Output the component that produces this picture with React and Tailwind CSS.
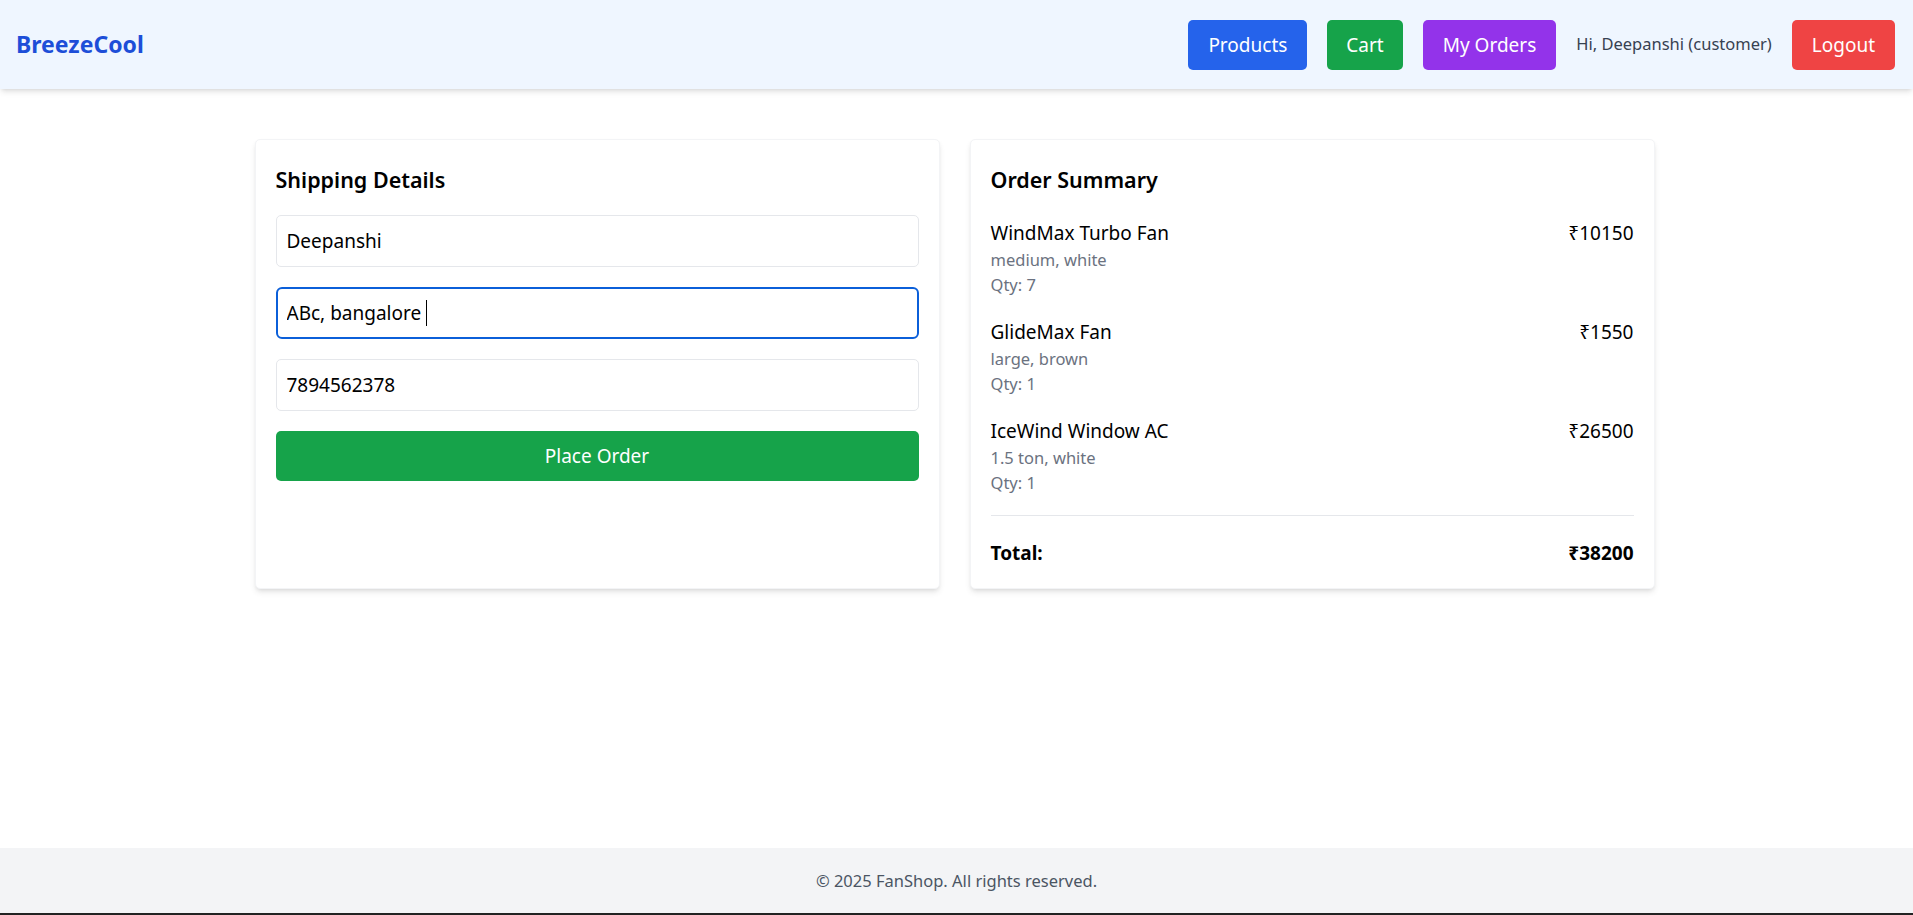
import { useState } from "react";

const items = [
  { name: "WindMax Turbo Fan", variant: "medium, white", qty: 7, price: 10150 },
  { name: "GlideMax Fan", variant: "large, brown", qty: 1, price: 1550 },
  { name: "IceWind Window AC", variant: "1.5 ton, white", qty: 1, price: 26500 },
];

const Header = () => (
  <header className="bg-[#eff6ff] shadow-md pl-4 pr-[18px] h-[89px] flex items-center justify-between">
    <h1 className="text-[23px] font-bold text-[#1d4ed8]">BreezeCool</h1>
    <nav className="flex items-center gap-5">
      <button className="bg-[#2563eb] text-white px-5 py-2.5 rounded-[5px] text-[19px] leading-[30px]">
        Products
      </button>
      <button className="bg-[#16a34a] text-white px-[19px] py-2.5 rounded-[5px] text-[19px] leading-[30px]">
        Cart
      </button>
      <button className="bg-[#9333ea] text-white px-5 py-2.5 rounded-[5px] text-[19px] leading-[30px]">
        My Orders
      </button>
      <span className="text-[#374151] text-[16.5px]">Hi, Deepanshi (customer)</span>
      <button className="bg-[#ef4444] text-white px-5 py-2.5 rounded-[5px] text-[19px] leading-[30px]">
        Logout
      </button>
    </nav>
  </header>
);

export default function App() {
  const [form, setForm] = useState({
    name: "Deepanshi",
    address: "ABc, bangalore ",
    phone: "7894562378",
  });

  const total = items.reduce((sum, i) => sum + i.price, 0);

  const handleChange = (e) => {
    setForm((prev) => ({ ...prev, [e.target.name]: e.target.value }));
  };

  return (
    <div className="min-h-screen flex flex-col bg-white text-black font-['Noto_Sans',sans-serif]">
      <Header />

      <main className="flex-1 w-full max-w-[1440px] mx-auto pl-[18px] pr-[22px] pt-[50px]">
        <div className="grid grid-cols-2 gap-[30px]">
          {/* Shipping form */}
          <div className="bg-white rounded-[5px] border border-gray-100 shadow-md p-5">
            <h2 className="text-[21.5px] leading-[35px] font-semibold mt-[2px] mb-[18px]">Shipping Details</h2>
            <div className="space-y-5">
              <input
                name="name"
                value={form.name}
                onChange={handleChange}
                className="w-full border border-[#e5e7eb] rounded-[5px] px-2.5 py-2.5 text-[19px] leading-[30px] outline-none"
              />
              <div className="relative">
                <input
                  name="address"
                  value={form.address}
                  onChange={handleChange}
                  className="w-full border-2 border-[#0b5fd9] rounded-[6px] px-[9px] py-[9px] text-[19px] leading-[30px] outline-none caret-transparent"
                />
                {/* static caret after the typed text */}
                <div className="absolute inset-0 px-[11px] py-[11px] text-[19px] leading-[30px] whitespace-pre pointer-events-none flex items-center">
                  <span className="invisible">{form.address}</span>
                  <span className="w-px h-[26px] bg-black" />
                </div>
              </div>
              <input
                name="phone"
                value={form.phone}
                onChange={handleChange}
                className="w-full border border-[#e5e7eb] rounded-[5px] px-2.5 py-2.5 text-[19px] leading-[30px] outline-none"
              />
              <button className="w-full bg-[#16a34a] text-white rounded-[5px] py-2.5 text-[19px] leading-[30px]">
                Place Order
              </button>
            </div>
          </div>

          {/* Order summary */}
          <div className="bg-white rounded-[5px] border border-gray-100 shadow-md p-5">
            <h2 className="text-[21.5px] leading-[35px] font-semibold mt-[2px] mb-[21px]">Order Summary</h2>
            <div className="space-y-5">
              {items.map((item) => (
                <div key={item.name} className="flex justify-between">
                  <div>
                    <p className="text-[19px] leading-[30px]">{item.name}</p>
                    <p className="text-[16.5px] leading-[24px] text-[#6b7280]">{item.variant}</p>
                    <p className="text-[16.5px] leading-[25px] text-[#6b7280]">Qty: {item.qty}</p>
                  </div>
                  <p className="text-[19px] leading-[30px]">₹{item.price}</p>
                </div>
              ))}
            </div>
            <div className="border-t border-[#e5e7eb] mt-5 pt-[22px] flex justify-between text-[19px] leading-[30px] font-bold">
              <span>Total:</span>
              <span>₹{total}</span>
            </div>
          </div>
        </div>
      </main>

      <footer className="bg-[#f3f4f6] py-5 text-center text-[16.5px] leading-[25px] text-[#4b5563] border-b-2 border-[#222]">
        © 2025 FanShop. All rights reserved.
      </footer>
    </div>
  );
}
